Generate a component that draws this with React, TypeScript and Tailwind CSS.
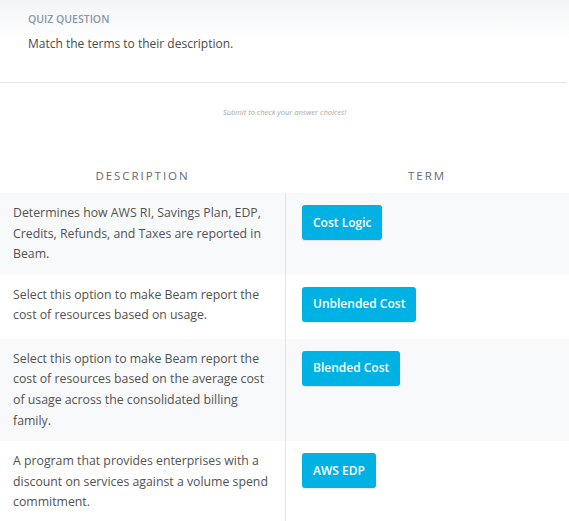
import React from 'react';

const rows = [
  {
    description: 'Determines how AWS RI, Savings Plan, EDP, Credits, Refunds, and Taxes are reported in Beam.',
    term: 'Cost Logic',
  },
  {
    description: 'Select this option to make Beam report the cost of resources based on usage.',
    term: 'Unblended Cost',
  },
  {
    description:
      'Select this option to make Beam report the cost of resources based on the average cost of usage across the consolidated billing family.',
    term: 'Blended Cost',
  },
  {
    description: 'A program that provides enterprises with a discount on services against a volume spend commitment.',
    term: 'AWS EDP',
  },
];

export default function App() {
  return (
    <div className="w-[569px] h-[521px] overflow-hidden bg-white font-['Open_Sans',sans-serif]">
      {/* Question header */}
      <div className="bg-gradient-to-b from-[#f3f4f6] via-white to-white pt-[12px] pl-[28px] h-[82px]">
        <div className="text-[10.5px] font-semibold uppercase text-[#8897ab] leading-[14px]">Quiz Question</div>
        <div className="mt-[9px] text-[12px] text-[#4a4a4a] leading-[18px]">Match the terms to their description.</div>
      </div>
      <div className="h-px bg-[#e3e6e8] mr-[3px]" />

      <div className="mt-[24px] text-center text-[7.5px] italic text-[#a9a9a9] leading-[10px]">
        Submit to check your answer choices!
      </div>

      {/* Column headings */}
      <div className="mt-[51px] flex text-[11.5px] tracking-[0.17em] text-[#656a70] leading-[16px] pb-[9px]">
        <div className="w-[285px] text-center">DESCRIPTION</div>
        <div className="flex-1 text-center">TERM</div>
      </div>

      {/* Matching rows */}
      <div>
        {rows.map((row, i) => (
          <div key={row.term} className={`flex ${i % 2 === 0 ? 'bg-[#f8f9fb]' : 'bg-white'}`}>
            <div className="w-[285px] pl-[13px] pr-[8px] pt-[10px] pb-[10px] text-[12.3px] leading-[20.6px] text-[#525252]">
              {row.description}
            </div>
            <div className="flex-1 border-l border-[#e2e4e6] pl-[16px] pt-[12px] pb-[17px]">
              <button className="h-[35px] px-[11px] rounded-[3px] bg-[#00b2e3] text-white text-[12px] font-semibold shadow-[0_1px_2px_rgba(0,0,0,0.12)]">
                {row.term}
              </button>
            </div>
          </div>
        ))}
      </div>
    </div>
  );
}
